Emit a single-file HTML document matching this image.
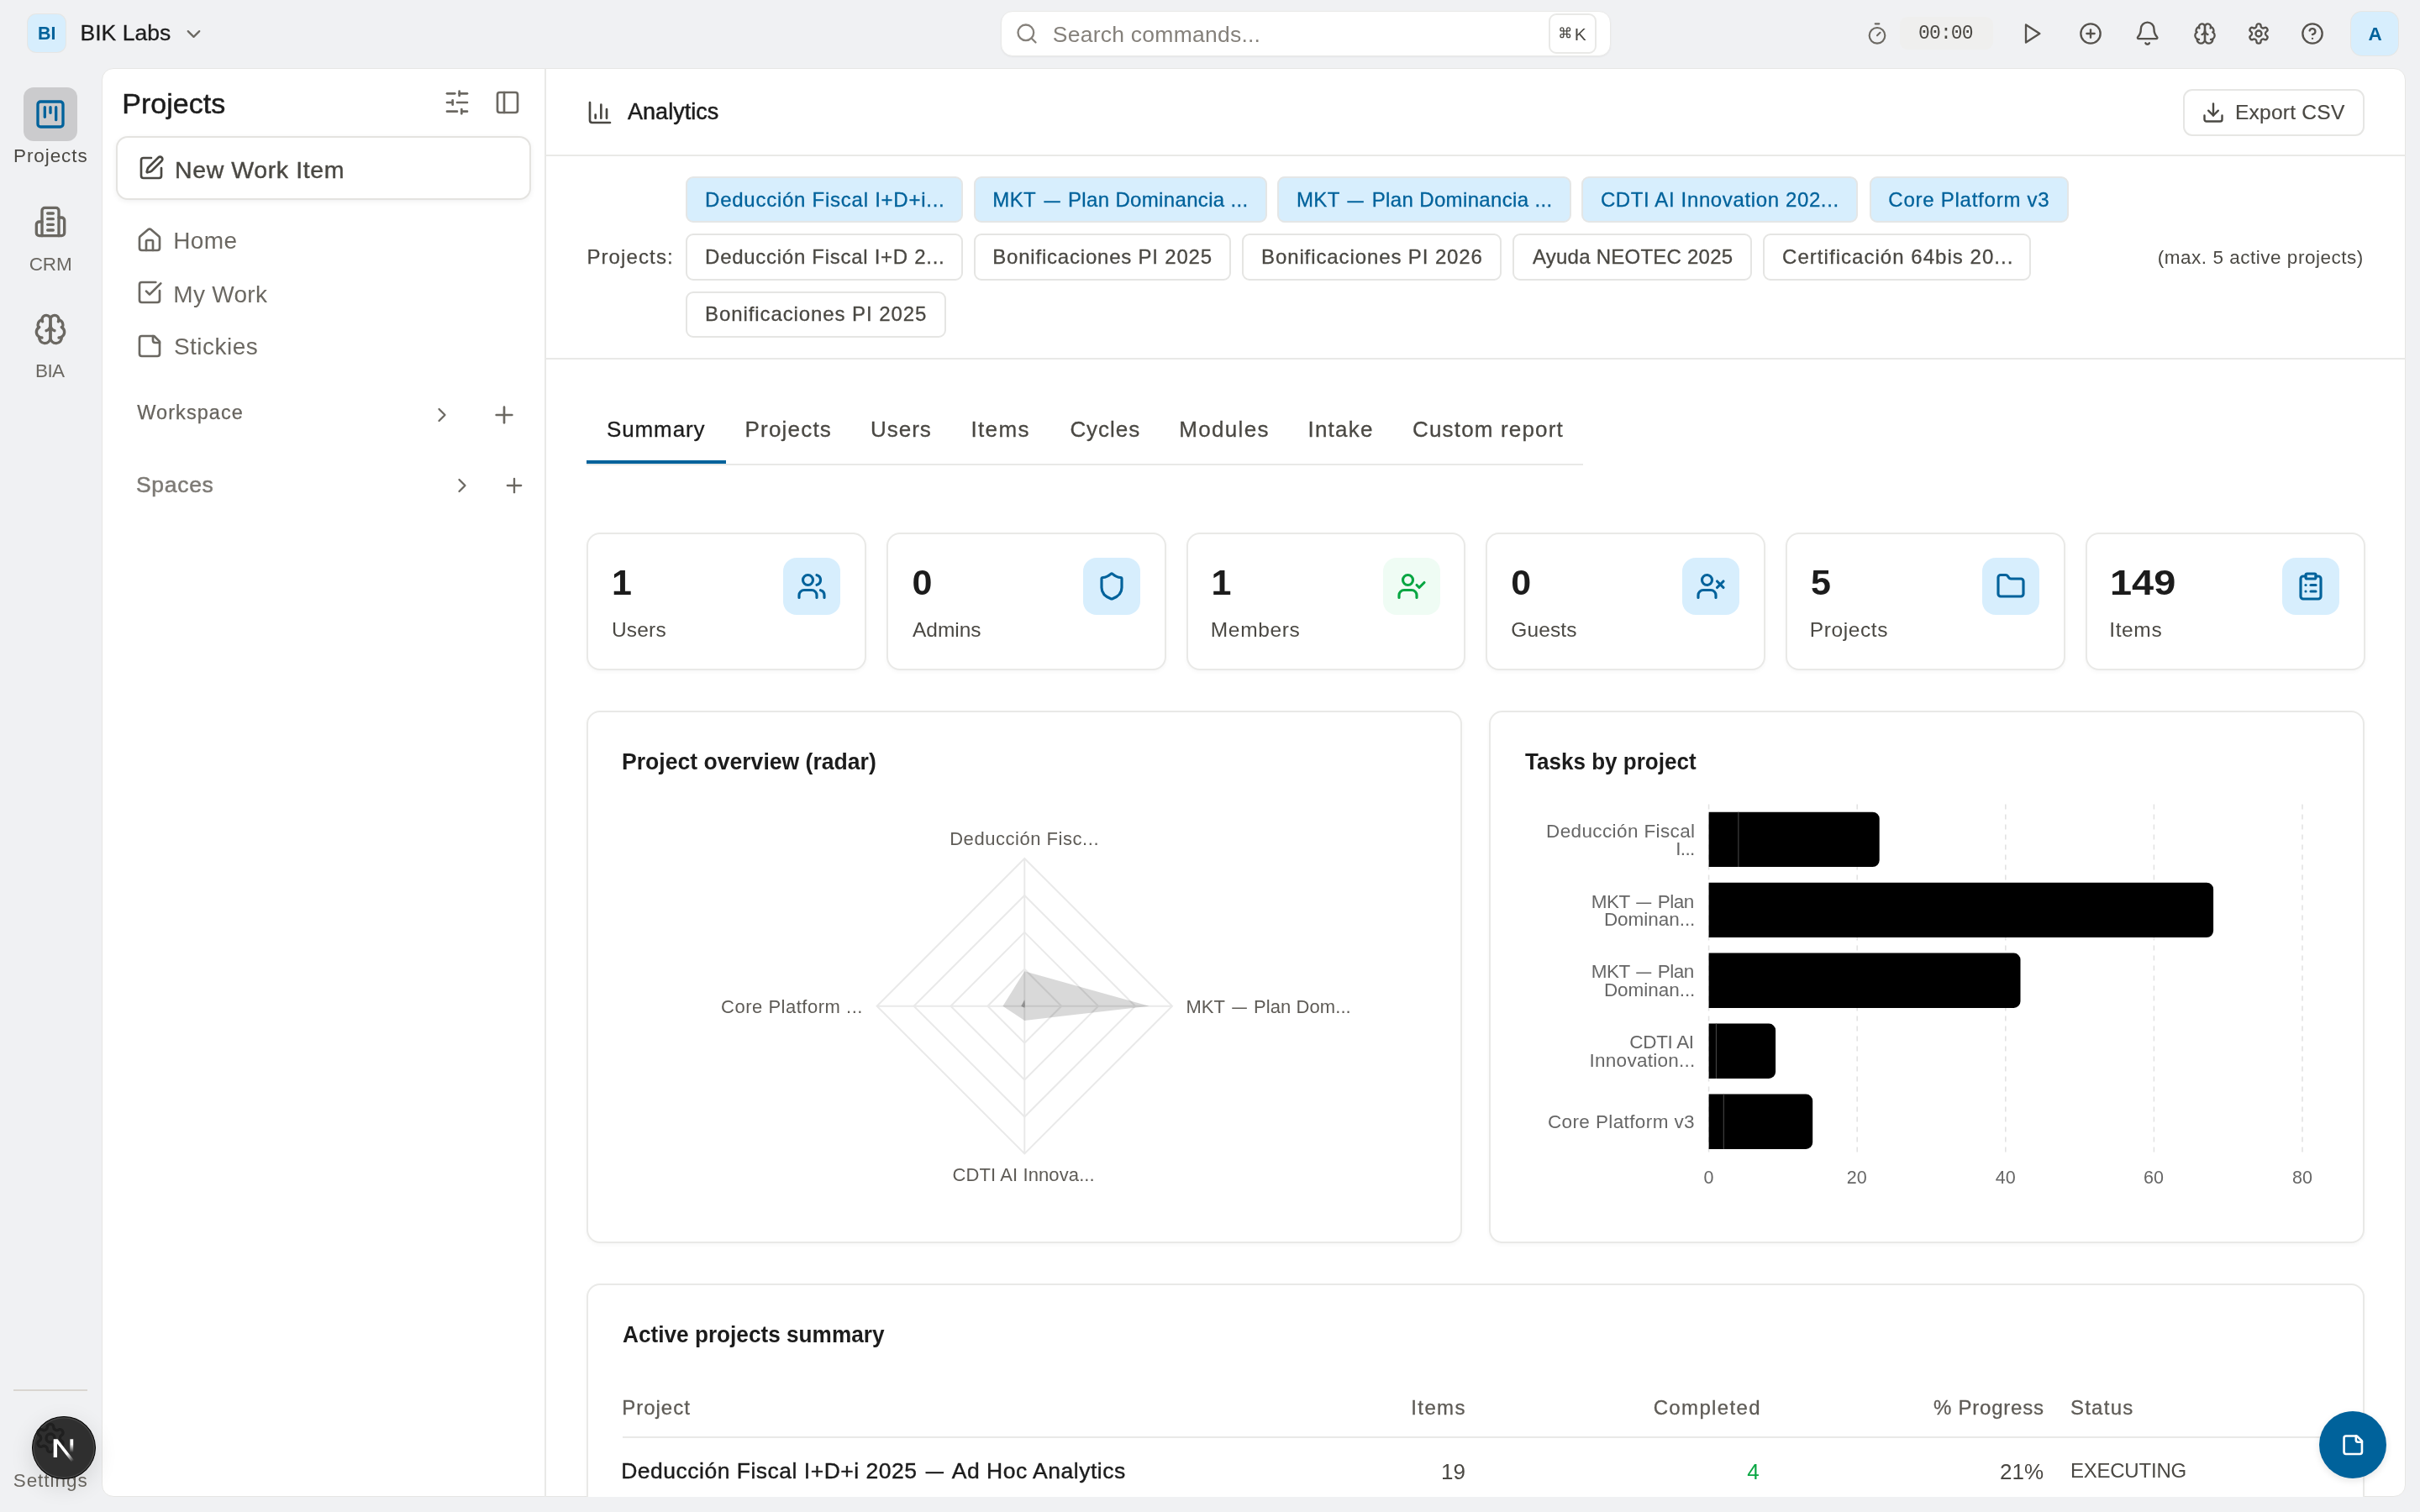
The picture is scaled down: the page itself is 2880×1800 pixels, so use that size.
<!DOCTYPE html>
<html><head><meta charset="utf-8"><title>Analytics</title>
<style>
html,body{margin:0;padding:0;}
body{width:2880px;height:1800px;overflow:hidden;background:#f0f1f3;position:relative;font-family:"Liberation Sans",sans-serif;}
#r{position:absolute;left:0;top:0;width:2880px;height:1800px;overflow:hidden;will-change:transform;}
#r>div,#r>span,#r>svg{position:absolute;box-sizing:border-box;}
#r>span{white-space:nowrap;display:block;}
#r>span>i{display:inline-block;font-style:normal;transform:scaleX(.8);}
</style></head><body><div id="r">
<div style="left:33.0px;top:17.0px;width:45.0px;height:45.0px;background:#d7eefd;border-radius:10px;box-shadow:0 0 0 1px #e6e6e4;"></div>
<span style="left:45.25px;top:29.38px;font-size:22.5px;line-height:22.5px;color:#00629b;font-weight:bold;transform-origin:0 0;transform:scaleX(0.9531);">BI</span>
<span style="left:95.50px;top:25.98px;font-size:26.5px;line-height:26.5px;color:#1c1c1c;letter-spacing:0.030px;-webkit-text-stroke:0.3px #1c1c1c;">BIK Labs</span>
<svg style="left:216.50px;top:26.50px" width="27" height="27" viewBox="0 0 24 24" fill="none" stroke="#6b6862" stroke-width="2.0" stroke-linecap="round" stroke-linejoin="round" ><path d="m6 9 6 6 6-6"/></svg>
<div style="left:1191.0px;top:13.0px;width:726.0px;height:53.5px;background:#fff;border-radius:14px;border:1px solid #e9e9e8;box-shadow:0 1px 2px rgba(0,0,0,.05);"></div>
<svg style="left:1207.60px;top:26.10px" width="28" height="28" viewBox="0 0 24 24" fill="none" stroke="#85817b" stroke-width="2.0" stroke-linecap="round" stroke-linejoin="round" ><circle cx="11" cy="11" r="8"/><path d="m21 21-4.300-4.300"/></svg>
<span style="left:1252.80px;top:28.18px;font-size:26.5px;line-height:26.5px;color:#85817b;letter-spacing:0.244px;">Search commands...</span>
<div style="left:1842.5px;top:16.4px;width:57.0px;height:47.2px;background:#fff;border-radius:9px;border:2px solid #e9e9e7;"></div>
<svg style="left:1854.75px;top:31.25px" width="15.5" height="15.5" viewBox="0 0 24 24" fill="none" stroke="#4a4843" stroke-width="2.1" stroke-linecap="round" stroke-linejoin="round" ><path d="M15 6v12a3 3 0 1 0 3-3H6a3 3 0 1 0 3 3V6a3 3 0 1 0-3 3h12a3 3 0 1 0-3-3"/></svg>
<span style="left:1873.80px;top:29.95px;font-size:21.0px;line-height:21.0px;color:#4a4843;">K</span>
<svg style="left:2219.80px;top:25.80px" width="28" height="28" viewBox="0 0 24 24" fill="none" stroke="#6b6862" stroke-width="1.8" stroke-linecap="round" stroke-linejoin="round" ><line x1="10" x2="14" y1="2" y2="2"/><line x1="12" x2="15" y1="14" y2="11"/><circle cx="12" cy="14" r="8"/></svg>
<div style="left:2261.0px;top:20.0px;width:110.5px;height:39.0px;background:#efefee;border-radius:9px;"></div>
<span style="left:2283.00px;top:29.27px;font-size:23px;line-height:23px;color:#4a4843;letter-spacing:-0.852px;font-family:'Liberation Mono',monospace;">00:00</span>
<svg style="left:2404.00px;top:26.00px" width="28" height="28" viewBox="0 0 24 24" fill="none" stroke="#55524d" stroke-width="2.0" stroke-linecap="round" stroke-linejoin="round" ><polygon points="6 3 20 12 6 21 6 3"/></svg>
<svg style="left:2474.00px;top:26.00px" width="28" height="28" viewBox="0 0 24 24" fill="none" stroke="#55524d" stroke-width="2.0" stroke-linecap="round" stroke-linejoin="round" ><circle cx="12" cy="12" r="10"/><path d="M8 12h8"/><path d="M12 8v8"/></svg>
<svg style="left:2540.25px;top:24.35px" width="31.3" height="31.3" viewBox="0 0 24 24" fill="none" stroke="#55524d" stroke-width="1.85" stroke-linecap="round" stroke-linejoin="round" ><path d="M10.268 21a2 2 0 0 0 3.464 0"/><path d="M3.262 15.326A1 1 0 0 0 4 17h16a1 1 0 0 0 .740-1.673C19.410 13.956 18 12.499 18 8A6 6 0 0 0 6 8c0 4.499-1.411 5.956-2.738 7.326"/></svg>
<svg style="left:2610.00px;top:26.00px" width="28" height="28" viewBox="0 0 24 24" fill="none" stroke="#55524d" stroke-width="2.0" stroke-linecap="round" stroke-linejoin="round" ><path d="M12 5a3 3 0 1 0-5.997.125 4 4 0 0 0-2.526 5.77 4 4 0 0 0 .556 6.588A4 4 0 1 0 12 18Z"/><path d="M12 5a3 3 0 1 1 5.997.125 4 4 0 0 1 2.526 5.77 4 4 0 0 1-.556 6.588A4 4 0 1 1 12 18Z"/><path d="M15 13a4.500 4.500 0 0 1-3-4 4.500 4.500 0 0 1-3 4"/><path d="M17.599 6.500a3 3 0 0 0 .399-1.375"/><path d="M6.003 5.125A3 3 0 0 0 6.401 6.500"/><path d="M3.477 10.896a4 4 0 0 1 .585-.396"/><path d="M19.938 10.500a4 4 0 0 1 .585.396"/><path d="M6 18a4 4 0 0 1-1.967-.516"/><path d="M19.967 17.484A4 4 0 0 1 18 18"/></svg>
<svg style="left:2673.80px;top:26.00px" width="28" height="28" viewBox="0 0 24 24" fill="none" stroke="#55524d" stroke-width="2.0" stroke-linecap="round" stroke-linejoin="round" ><path d="M12.220 2h-.440a2 2 0 0 0-2 2v.180a2 2 0 0 1-1 1.730l-.430.250a2 2 0 0 1-2 0l-.150-.080a2 2 0 0 0-2.730.730l-.220.380a2 2 0 0 0 .730 2.730l.150.100a2 2 0 0 1 1 1.720v.510a2 2 0 0 1-1 1.740l-.150.090a2 2 0 0 0-.730 2.730l.220.380a2 2 0 0 0 2.730.730l.150-.080a2 2 0 0 1 2 0l.430.250a2 2 0 0 1 1 1.730V20a2 2 0 0 0 2 2h.440a2 2 0 0 0 2-2v-.180a2 2 0 0 1 1-1.730l.430-.250a2 2 0 0 1 2 0l.150.080a2 2 0 0 0 2.730-.730l.220-.390a2 2 0 0 0-.730-2.730l-.150-.080a2 2 0 0 1-1-1.740v-.500a2 2 0 0 1 1-1.740l.150-.090a2 2 0 0 0 .730-2.730l-.220-.380a2 2 0 0 0-2.730-.730l-.150.080a2 2 0 0 1-2 0l-.430-.250a2 2 0 0 1-1-1.730V4a2 2 0 0 0-2-2z"/><circle cx="12" cy="12" r="3"/></svg>
<svg style="left:2738.00px;top:26.00px" width="28" height="28" viewBox="0 0 24 24" fill="none" stroke="#55524d" stroke-width="2.0" stroke-linecap="round" stroke-linejoin="round" ><circle cx="12" cy="12" r="10"/><path d="M9.090 9a3 3 0 0 1 5.830 1c0 2-3 3-3 3"/><path d="M12 17h.010"/></svg>
<div style="left:2798.0px;top:14.0px;width:56.0px;height:52.0px;background:#d7eefd;border-radius:13px;box-shadow:0 0 0 1px #e6e6e4;"></div>
<span style="left:2818.40px;top:29.68px;font-size:22.5px;line-height:22.5px;color:#00629b;font-weight:bold;">A</span>
<div style="left:28.0px;top:104.0px;width:64.0px;height:64.0px;background:#cbcbcd;border-radius:12px;"></div>
<svg style="left:40.00px;top:116.00px" width="40" height="40" viewBox="0 0 24 24" fill="none" stroke="#00629b" stroke-width="2.0" stroke-linecap="round" stroke-linejoin="round" ><rect width="18" height="18" x="3" y="3" rx="2"/><path d="M8 7v7"/><path d="M12 7v4"/><path d="M16 7v9"/></svg>
<span style="left:16.00px;top:175.28px;font-size:22.5px;line-height:22.5px;color:#4a4843;letter-spacing:0.910px;">Projects</span>
<svg style="left:40.00px;top:244.00px" width="40" height="40" viewBox="0 0 24 24" fill="none" stroke="#6b6862" stroke-width="2.0" stroke-linecap="round" stroke-linejoin="round" ><path d="M6 22V4a2 2 0 0 1 2-2h8a2 2 0 0 1 2 2v18Z"/><path d="M6 12H4a2 2 0 0 0-2 2v6a2 2 0 0 0 2 2h2"/><path d="M18 9h2a2 2 0 0 1 2 2v9a2 2 0 0 1-2 2h-2"/><path d="M10 6h4"/><path d="M10 10h4"/><path d="M10 14h4"/><path d="M10 18h4"/></svg>
<span style="left:34.80px;top:304.18px;font-size:22.5px;line-height:22.5px;color:#6b6862;letter-spacing:-0.199px;">CRM</span>
<svg style="left:40.00px;top:372.00px" width="40" height="40" viewBox="0 0 24 24" fill="none" stroke="#6b6862" stroke-width="2.0" stroke-linecap="round" stroke-linejoin="round" ><path d="M12 5a3 3 0 1 0-5.997.125 4 4 0 0 0-2.526 5.77 4 4 0 0 0 .556 6.588A4 4 0 1 0 12 18Z"/><path d="M12 5a3 3 0 1 1 5.997.125 4 4 0 0 1 2.526 5.77 4 4 0 0 1-.556 6.588A4 4 0 1 1 12 18Z"/><path d="M15 13a4.500 4.500 0 0 1-3-4 4.500 4.500 0 0 1-3 4"/><path d="M17.599 6.500a3 3 0 0 0 .399-1.375"/><path d="M6.003 5.125A3 3 0 0 0 6.401 6.500"/><path d="M3.477 10.896a4 4 0 0 1 .585-.396"/><path d="M19.938 10.500a4 4 0 0 1 .585.396"/><path d="M6 18a4 4 0 0 1-1.967-.516"/><path d="M19.967 17.484A4 4 0 0 1 18 18"/></svg>
<span style="left:42.00px;top:431.38px;font-size:22.5px;line-height:22.5px;color:#6b6862;letter-spacing:-0.629px;">BIA</span>
<div style="left:16.0px;top:1654.0px;width:88.0px;height:2.0px;background:#d9d5d0;"></div>
<span style="left:15.70px;top:1751.77px;font-size:22.5px;line-height:22.5px;color:#6b6862;letter-spacing:0.950px;">Settings</span>
<div style="left:121.0px;top:81.0px;width:2741.6px;height:1701.4px;background:#fff;border-radius:14px;border:1px solid #e6e6e4;"></div>
<div style="left:648.0px;top:81.0px;width:2.0px;height:1701.0px;background:#e9e9e7;"></div>
<span style="left:145.30px;top:105.70px;font-size:34.0px;line-height:34.0px;color:#1c1c1c;letter-spacing:0.026px;-webkit-text-stroke:0.5px #1c1c1c;">Projects</span>
<svg style="left:527.70px;top:106.00px" width="32" height="32" viewBox="0 0 24 24" fill="none" stroke="#6b6862" stroke-width="2.0" stroke-linecap="round" stroke-linejoin="round" ><line x1="21" x2="14" y1="4" y2="4"/><line x1="10" x2="3" y1="4" y2="4"/><line x1="21" x2="12" y1="12" y2="12"/><line x1="8" x2="3" y1="12" y2="12"/><line x1="21" x2="16" y1="20" y2="20"/><line x1="12" x2="3" y1="20" y2="20"/><line x1="14" x2="14" y1="2" y2="6"/><line x1="8" x2="8" y1="10" y2="14"/><line x1="16" x2="16" y1="18" y2="22"/></svg>
<svg style="left:588.00px;top:106.00px" width="32" height="32" viewBox="0 0 24 24" fill="none" stroke="#6b6862" stroke-width="2.0" stroke-linecap="round" stroke-linejoin="round" ><rect width="18" height="18" x="3" y="3" rx="2"/><path d="M9 3v18"/></svg>
<div style="left:138.0px;top:162.0px;width:494.0px;height:76.0px;background:#fff;border-radius:14px;border:2px solid #e4e3e0;box-shadow:0 2px 6px rgba(0,0,0,.06);"></div>
<svg style="left:164.00px;top:184.00px" width="32" height="32" viewBox="0 0 24 24" fill="none" stroke="#4a4843" stroke-width="2.0" stroke-linecap="round" stroke-linejoin="round" ><path d="M12 3H5a2 2 0 0 0-2 2v14a2 2 0 0 0 2 2h14a2 2 0 0 0 2-2v-7"/><path d="M18.375 2.625a1 1 0 0 1 3 3l-9.013 9.014a2 2 0 0 1-.853.505l-2.873.84a.5.5 0 0 1-.62-.62l.84-2.873a2 2 0 0 1 .506-.852z"/></svg>
<span style="left:208.00px;top:188.28px;font-size:28.5px;line-height:28.5px;color:#4a4843;letter-spacing:0.599px;-webkit-text-stroke:0.4px #4a4843;">New Work Item</span>
<svg style="left:162.20px;top:269.90px" width="32" height="32" viewBox="0 0 24 24" fill="none" stroke="#6b6862" stroke-width="2.0" stroke-linecap="round" stroke-linejoin="round" ><path d="M15 21v-8a1 1 0 0 0-1-1h-4a1 1 0 0 0-1 1v8"/><path d="M3 10a2 2 0 0 1 .709-1.528l7-5.999a2 2 0 0 1 2.582 0l7 5.999A2 2 0 0 1 21 10v9a2 2 0 0 1-2 2H5a2 2 0 0 1-2-2z"/></svg>
<span style="left:206.30px;top:272.50px;font-size:28px;line-height:28px;color:#6b6862;letter-spacing:0.328px;">Home</span>
<svg style="left:162.20px;top:332.20px" width="32" height="32" viewBox="0 0 24 24" fill="none" stroke="#6b6862" stroke-width="2.0" stroke-linecap="round" stroke-linejoin="round" ><path d="M21 10.500V19a2 2 0 0 1-2 2H5a2 2 0 0 1-2-2V5a2 2 0 0 1 2-2h12.500"/><path d="m9 11 3 3L22 4"/></svg>
<span style="left:206.30px;top:336.70px;font-size:28px;line-height:28px;color:#6b6862;letter-spacing:0.296px;">My Work</span>
<svg style="left:162.00px;top:396.00px" width="32" height="32" viewBox="0 0 24 24" fill="none" stroke="#6b6862" stroke-width="2.0" stroke-linecap="round" stroke-linejoin="round" ><path d="M16 3H5a2 2 0 0 0-2 2v14a2 2 0 0 0 2 2h14a2 2 0 0 0 2-2V8Z"/><path d="M15 3v4a2 2 0 0 0 2 2h4"/></svg>
<span style="left:206.90px;top:398.50px;font-size:28px;line-height:28px;color:#6b6862;letter-spacing:0.490px;">Stickies</span>
<span style="left:163.30px;top:480.23px;font-size:23.5px;line-height:23.5px;color:#67645e;letter-spacing:1.057px;-webkit-text-stroke:0.25px #67645e;">Workspace</span>
<svg style="left:511.90px;top:480.00px" width="28" height="28" viewBox="0 0 24 24" fill="none" stroke="#6b6862" stroke-width="1.95" stroke-linecap="round" stroke-linejoin="round" ><path d="m9 18 6-6-6-6"/></svg>
<svg style="left:583.90px;top:478.00px" width="32" height="32" viewBox="0 0 24 24" fill="none" stroke="#6b6862" stroke-width="2.0" stroke-linecap="round" stroke-linejoin="round" ><path d="M5 12h14"/><path d="M12 5v14"/></svg>
<span style="left:162.00px;top:564.08px;font-size:26.5px;line-height:26.5px;color:#7d7a75;letter-spacing:0.692px;-webkit-text-stroke:0.5px #7d7a75;">Spaces</span>
<svg style="left:535.90px;top:563.80px" width="28" height="28" viewBox="0 0 24 24" fill="none" stroke="#6b6862" stroke-width="1.95" stroke-linecap="round" stroke-linejoin="round" ><path d="m9 18 6-6-6-6"/></svg>
<svg style="left:597.90px;top:564.00px" width="28" height="28" viewBox="0 0 24 24" fill="none" stroke="#6b6862" stroke-width="2.0" stroke-linecap="round" stroke-linejoin="round" ><path d="M5 12h14"/><path d="M12 5v14"/></svg>
<svg style="left:697.90px;top:118.30px" width="32" height="32" viewBox="0 0 24 24" fill="none" stroke="#4a4843" stroke-width="2.0" stroke-linecap="round" stroke-linejoin="round" ><path d="M3 3v16a2 2 0 0 0 2 2h16"/><path d="M18 17V9"/><path d="M13 17V5"/><path d="M8 17v-3"/></svg>
<span style="left:747.00px;top:120.15px;font-size:27.0px;line-height:27.0px;color:#1c1c1c;letter-spacing:0.033px;-webkit-text-stroke:0.5px #1c1c1c;">Analytics</span>
<div style="left:2598.3px;top:106.0px;width:215.7px;height:56.0px;background:#fff;border-radius:11px;border:2px solid #e6e6e4;"></div>
<svg style="left:2620.00px;top:119.90px" width="28" height="28" viewBox="0 0 24 24" fill="none" stroke="#4a4843" stroke-width="2.05" stroke-linecap="round" stroke-linejoin="round" ><path d="M21 15v4a2 2 0 0 1-2 2H5a2 2 0 0 1-2-2v-4"/><polyline points="7 10 12 15 17 10"/><line x1="12" x2="12" y1="15" y2="3"/></svg>
<span style="left:2660.00px;top:121.67px;font-size:24.5px;line-height:24.5px;color:#4a4843;letter-spacing:0.250px;-webkit-text-stroke:0.2px #4a4843;">Export CSV</span>
<div style="left:650.0px;top:184.0px;width:2212.5px;height:2.0px;background:#e9e9e7;"></div>
<span style="left:698.40px;top:294.30px;font-size:24px;line-height:24px;color:#4a4843;letter-spacing:1.113px;-webkit-text-stroke:0.25px #4a4843;">Projects:</span>
<div style="left:816.4px;top:210.2px;width:329.4px;height:55.3px;background:#d7eefd;border-radius:9px;border:2px solid #e4e6e6;"></div>
<span style="left:839.10px;top:226.00px;font-size:24px;line-height:24px;color:#00629b;letter-spacing:0.745px;-webkit-text-stroke:0.3px #00629b;">Deducción Fiscal I+D+i...</span>
<div style="left:1158.6px;top:210.2px;width:349.1px;height:55.3px;background:#d7eefd;border-radius:9px;border:2px solid #e4e6e6;"></div>
<span style="left:1181.30px;top:226.00px;font-size:24px;line-height:24px;color:#00629b;letter-spacing:0.345px;-webkit-text-stroke:0.3px #00629b;">MKT <i>—</i> Plan Dominancia ...</span>
<div style="left:1520.3px;top:210.2px;width:349.4px;height:55.3px;background:#d7eefd;border-radius:9px;border:2px solid #e4e6e6;"></div>
<span style="left:1543.00px;top:226.00px;font-size:24px;line-height:24px;color:#00629b;letter-spacing:0.357px;-webkit-text-stroke:0.3px #00629b;">MKT <i>—</i> Plan Dominancia ...</span>
<div style="left:1882.2px;top:210.2px;width:329.3px;height:55.3px;background:#d7eefd;border-radius:9px;border:2px solid #e4e6e6;"></div>
<span style="left:1904.90px;top:226.00px;font-size:24px;line-height:24px;color:#00629b;letter-spacing:0.629px;-webkit-text-stroke:0.3px #00629b;">CDTI AI Innovation 202...</span>
<div style="left:2224.6px;top:210.2px;width:237.4px;height:55.3px;background:#d7eefd;border-radius:9px;border:2px solid #e4e6e6;"></div>
<span style="left:2247.30px;top:226.00px;font-size:24px;line-height:24px;color:#00629b;letter-spacing:0.753px;-webkit-text-stroke:0.3px #00629b;">Core Platform v3</span>
<div style="left:816.4px;top:278.4px;width:329.4px;height:55.3px;background:#fff;border-radius:9px;border:2px solid #e5e5e3;"></div>
<span style="left:839.10px;top:294.20px;font-size:24px;line-height:24px;color:#4a4843;letter-spacing:0.718px;-webkit-text-stroke:0.3px #4a4843;">Deducción Fiscal I+D 2...</span>
<div style="left:1158.6px;top:278.4px;width:306.8px;height:55.3px;background:#fff;border-radius:9px;border:2px solid #e5e5e3;"></div>
<span style="left:1181.30px;top:294.20px;font-size:24px;line-height:24px;color:#4a4843;letter-spacing:0.790px;-webkit-text-stroke:0.3px #4a4843;">Bonificaciones PI 2025</span>
<div style="left:1478.3px;top:278.4px;width:309.0px;height:55.3px;background:#fff;border-radius:9px;border:2px solid #e5e5e3;"></div>
<span style="left:1501.00px;top:294.20px;font-size:24px;line-height:24px;color:#4a4843;letter-spacing:0.895px;-webkit-text-stroke:0.3px #4a4843;">Bonificaciones PI 2026</span>
<div style="left:1800.2px;top:278.4px;width:285.3px;height:55.3px;background:#fff;border-radius:9px;border:2px solid #e5e5e3;"></div>
<span style="left:1823.90px;top:294.20px;font-size:24px;line-height:24px;color:#4a4843;letter-spacing:0.244px;-webkit-text-stroke:0.3px #4a4843;">Ayuda NEOTEC 2025</span>
<div style="left:2098.4px;top:278.4px;width:319.0px;height:55.3px;background:#fff;border-radius:9px;border:2px solid #e5e5e3;"></div>
<span style="left:2121.10px;top:294.20px;font-size:24px;line-height:24px;color:#4a4843;letter-spacing:1.034px;-webkit-text-stroke:0.3px #4a4843;">Certificación 64bis 20...</span>
<div style="left:816.4px;top:346.6px;width:309.2px;height:55.3px;background:#fff;border-radius:9px;border:2px solid #e5e5e3;"></div>
<span style="left:839.10px;top:362.40px;font-size:24px;line-height:24px;color:#4a4843;letter-spacing:0.904px;-webkit-text-stroke:0.3px #4a4843;">Bonificaciones PI 2025</span>
<span style="left:2567.80px;top:295.68px;font-size:22.5px;line-height:22.5px;color:#4a4843;letter-spacing:0.518px;">(max. 5 active projects)</span>
<div style="left:650.0px;top:426.0px;width:2212.5px;height:2.0px;background:#e9e9e7;"></div>
<span style="left:722.00px;top:498.20px;font-size:26.0px;line-height:26.0px;color:#1c1c1c;letter-spacing:0.877px;-webkit-text-stroke:0.3px #1c1c1c;">Summary</span>
<span style="left:886.50px;top:498.20px;font-size:26.0px;line-height:26.0px;color:#4a4843;letter-spacing:1.197px;-webkit-text-stroke:0.3px #4a4843;">Projects</span>
<span style="left:1035.90px;top:498.20px;font-size:26.0px;line-height:26.0px;color:#4a4843;letter-spacing:1.001px;-webkit-text-stroke:0.3px #4a4843;">Users</span>
<span style="left:1155.50px;top:498.20px;font-size:26.0px;line-height:26.0px;color:#4a4843;letter-spacing:1.334px;-webkit-text-stroke:0.3px #4a4843;">Items</span>
<span style="left:1273.40px;top:498.20px;font-size:26.0px;line-height:26.0px;color:#4a4843;letter-spacing:0.957px;-webkit-text-stroke:0.3px #4a4843;">Cycles</span>
<span style="left:1403.30px;top:498.20px;font-size:26.0px;line-height:26.0px;color:#4a4843;letter-spacing:1.304px;-webkit-text-stroke:0.3px #4a4843;">Modules</span>
<span style="left:1556.50px;top:498.20px;font-size:26.0px;line-height:26.0px;color:#4a4843;letter-spacing:1.207px;-webkit-text-stroke:0.3px #4a4843;">Intake</span>
<span style="left:1681.00px;top:498.20px;font-size:26.0px;line-height:26.0px;color:#4a4843;letter-spacing:1.167px;-webkit-text-stroke:0.3px #4a4843;">Custom report</span>
<div style="left:698.0px;top:552.0px;width:1186.0px;height:2.0px;background:#e9e9e7;"></div>
<div style="left:698.0px;top:548.0px;width:166.0px;height:4.0px;background:#00629b;"></div>
<div style="left:698.0px;top:634.0px;width:332.8px;height:164.0px;background:#fff;border-radius:16px;border:2px solid #e9e9e7;box-shadow:0 2px 5px rgba(0,0,0,.035);"></div>
<span style="left:728.00px;top:672.35px;font-size:43px;line-height:43px;color:#1c1c1c;font-weight:bold;">1</span>
<span style="left:728.00px;top:738.17px;font-size:24.5px;line-height:24.5px;color:#4a4843;letter-spacing:0.168px;">Users</span>
<div style="left:932.0px;top:664.0px;width:68.0px;height:68.0px;background:#d7eefd;border-radius:16px;"></div>
<svg style="left:948.00px;top:680.00px" width="36" height="36" viewBox="0 0 24 24" fill="none" stroke="#00629b" stroke-width="2.1" stroke-linecap="round" stroke-linejoin="round" ><path d="M16 21v-2a4 4 0 0 0-4-4H6a4 4 0 0 0-4 4v2"/><circle cx="9" cy="7" r="4"/><path d="M22 21v-2a4 4 0 0 0-3-3.870"/><path d="M16 3.130a4 4 0 0 1 0 7.750"/></svg>
<div style="left:1054.8px;top:634.0px;width:332.8px;height:164.0px;background:#fff;border-radius:16px;border:2px solid #e9e9e7;box-shadow:0 2px 5px rgba(0,0,0,.035);"></div>
<span style="left:1085.40px;top:672.35px;font-size:43px;line-height:43px;color:#1c1c1c;font-weight:bold;">0</span>
<span style="left:1086.00px;top:738.17px;font-size:24.5px;line-height:24.5px;color:#4a4843;letter-spacing:-0.029px;">Admins</span>
<div style="left:1288.8px;top:664.0px;width:68.0px;height:68.0px;background:#d7eefd;border-radius:16px;"></div>
<svg style="left:1304.80px;top:680.00px" width="36" height="36" viewBox="0 0 24 24" fill="none" stroke="#00629b" stroke-width="2.1" stroke-linecap="round" stroke-linejoin="round" ><path d="M20 13c0 5-3.500 7.500-7.660 8.950a1 1 0 0 1-.670-.010C7.500 20.500 4 18 4 13V6a1 1 0 0 1 1-1c2 0 4.500-1.200 6.240-2.720a1.170 1.170 0 0 1 1.520 0C14.510 3.810 17 5 19 5a1 1 0 0 1 1 1z"/></svg>
<div style="left:1411.6px;top:634.0px;width:332.8px;height:164.0px;background:#fff;border-radius:16px;border:2px solid #e9e9e7;box-shadow:0 2px 5px rgba(0,0,0,.035);"></div>
<span style="left:1441.50px;top:672.35px;font-size:43px;line-height:43px;color:#1c1c1c;font-weight:bold;">1</span>
<span style="left:1440.80px;top:738.17px;font-size:24.5px;line-height:24.5px;color:#4a4843;letter-spacing:0.658px;">Members</span>
<div style="left:1645.6px;top:664.0px;width:68.0px;height:68.0px;background:#effcf4;border-radius:16px;"></div>
<svg style="left:1661.60px;top:680.00px" width="36" height="36" viewBox="0 0 24 24" fill="none" stroke="#08a642" stroke-width="2.1" stroke-linecap="round" stroke-linejoin="round" ><path d="M16 21v-2a4 4 0 0 0-4-4H6a4 4 0 0 0-4 4v2"/><circle cx="9" cy="7" r="4"/><polyline points="16 11 18 13 22 9"/></svg>
<div style="left:1768.4px;top:634.0px;width:332.8px;height:164.0px;background:#fff;border-radius:16px;border:2px solid #e9e9e7;box-shadow:0 2px 5px rgba(0,0,0,.035);"></div>
<span style="left:1798.30px;top:672.35px;font-size:43px;line-height:43px;color:#1c1c1c;font-weight:bold;">0</span>
<span style="left:1798.30px;top:738.17px;font-size:24.5px;line-height:24.5px;color:#4a4843;letter-spacing:0.107px;">Guests</span>
<div style="left:2002.4px;top:664.0px;width:68.0px;height:68.0px;background:#d7eefd;border-radius:16px;"></div>
<svg style="left:2018.40px;top:680.00px" width="36" height="36" viewBox="0 0 24 24" fill="none" stroke="#00629b" stroke-width="2.1" stroke-linecap="round" stroke-linejoin="round" ><path d="M16 21v-2a4 4 0 0 0-4-4H6a4 4 0 0 0-4 4v2"/><circle cx="9" cy="7" r="4"/><line x1="17" x2="22" y1="8" y2="13"/><line x1="22" x2="17" y1="8" y2="13"/></svg>
<div style="left:2125.2px;top:634.0px;width:332.8px;height:164.0px;background:#fff;border-radius:16px;border:2px solid #e9e9e7;box-shadow:0 2px 5px rgba(0,0,0,.035);"></div>
<span style="left:2155.00px;top:672.35px;font-size:43px;line-height:43px;color:#1c1c1c;font-weight:bold;">5</span>
<span style="left:2153.70px;top:738.17px;font-size:24.5px;line-height:24.5px;color:#4a4843;letter-spacing:0.607px;">Projects</span>
<div style="left:2359.2px;top:664.0px;width:68.0px;height:68.0px;background:#d7eefd;border-radius:16px;"></div>
<svg style="left:2375.20px;top:680.00px" width="36" height="36" viewBox="0 0 24 24" fill="none" stroke="#00629b" stroke-width="2.1" stroke-linecap="round" stroke-linejoin="round" ><path d="M20 20a2 2 0 0 0 2-2V8a2 2 0 0 0-2-2h-7.900a2 2 0 0 1-1.690-.900L9.600 3.900A2 2 0 0 0 7.930 3H4a2 2 0 0 0-2 2v13a2 2 0 0 0 2 2Z"/></svg>
<div style="left:2482.0px;top:634.0px;width:332.8px;height:164.0px;background:#fff;border-radius:16px;border:2px solid #e9e9e7;box-shadow:0 2px 5px rgba(0,0,0,.035);"></div>
<span style="left:2510.62px;top:672.35px;font-size:43px;line-height:43px;color:#1c1c1c;font-weight:bold;transform-origin:0 0;transform:scaleX(1.0911);">149</span>
<span style="left:2510.20px;top:738.17px;font-size:24.5px;line-height:24.5px;color:#4a4843;letter-spacing:0.638px;">Items</span>
<div style="left:2716.0px;top:664.0px;width:68.0px;height:68.0px;background:#d7eefd;border-radius:16px;"></div>
<svg style="left:2732.00px;top:680.00px" width="36" height="36" viewBox="0 0 24 24" fill="none" stroke="#00629b" stroke-width="2.1" stroke-linecap="round" stroke-linejoin="round" ><rect width="8" height="4" x="8" y="2" rx="1" ry="1"/><path d="M16 4h2a2 2 0 0 1 2 2v14a2 2 0 0 1-2 2H6a2 2 0 0 1-2-2V6a2 2 0 0 1 2-2h2"/><path d="M12 11h4"/><path d="M12 16h4"/><path d="M8 11h.010"/><path d="M8 16h.010"/></svg>
<div style="left:698.0px;top:846.0px;width:1042.0px;height:634.0px;background:#fff;border-radius:16px;border:2px solid #e9e9e7;box-shadow:0 2px 5px rgba(0,0,0,.035);"></div>
<div style="left:1772.0px;top:846.0px;width:1042.0px;height:634.0px;background:#fff;border-radius:16px;border:2px solid #e9e9e7;box-shadow:0 2px 5px rgba(0,0,0,.035);"></div>
<span style="left:740.22px;top:893.65px;font-size:27px;line-height:27px;color:#1c1c1c;font-weight:bold;transform-origin:0 0;transform:scaleX(0.9842);">Project overview (radar)</span>
<span style="left:1815.20px;top:893.65px;font-size:27px;line-height:27px;color:#1c1c1c;font-weight:bold;transform-origin:0 0;transform:scaleX(0.9645);">Tasks by project</span>
<svg style="left:0;top:0" width="2880" height="1800" viewBox="0 0 2880 1800" fill="none"><polygon points="1219.3,1153.775 1263.225,1197.7 1219.3,1241.625 1175.375,1197.7" stroke="#e9e9e9" stroke-width="2"/><polygon points="1219.3,1109.8500000000001 1307.1499999999999,1197.7 1219.3,1285.55 1131.45,1197.7" stroke="#e9e9e9" stroke-width="2"/><polygon points="1219.3,1065.9250000000002 1351.0749999999998,1197.7 1219.3,1329.475 1087.525,1197.7" stroke="#e9e9e9" stroke-width="2"/><polygon points="1219.3,1022.0 1395.0,1197.7 1219.3,1373.4 1043.6,1197.7" stroke="#e9e9e9" stroke-width="2"/><path d="M1043.6 1197.7H1395.0M1219.3 1022.0V1373.4" stroke="#e9e9e9" stroke-width="2"/><polygon points="1219.3,1156.2 1367.7,1197.7 1219.3,1215.0 1193.3999999999999,1197.7" fill="#000" fill-opacity="0.15"/><polygon points="1219.3,1190.2 1219.8999999999999,1197.7 1219.3,1199.7 1215.2,1197.7" fill="#000" fill-opacity="0.3"/><path d="M2033.6 957.5V1372.5" stroke="#e3e3e3" stroke-width="1.6" stroke-dasharray="6 6"/><path d="M2210.2 957.5V1372.5" stroke="#e3e3e3" stroke-width="1.6" stroke-dasharray="6 6"/><path d="M2386.8 957.5V1372.5" stroke="#e3e3e3" stroke-width="1.6" stroke-dasharray="6 6"/><path d="M2563.4 957.5V1372.5" stroke="#e3e3e3" stroke-width="1.6" stroke-dasharray="6 6"/><path d="M2740.0 957.5V1372.5" stroke="#e3e3e3" stroke-width="1.6" stroke-dasharray="6 6"/><path d="M2033.6 966.7H2228.7a8 8 0 0 1 8 8V1024.0a8 8 0 0 1 -8 8H2033.6Z" fill="#000"/><path d="M2068.9 966.7v65.3" stroke="#4a4a4a" stroke-width="1"/><path d="M2033.6 1050.7H2626.1a8 8 0 0 1 8 8V1108.0a8 8 0 0 1 -8 8H2033.6Z" fill="#000"/><path d="M2033.6 1134.6H2396.5a8 8 0 0 1 8 8V1191.9a8 8 0 0 1 -8 8H2033.6Z" fill="#000"/><path d="M2033.6 1218.6H2105.1a8 8 0 0 1 8 8V1275.9a8 8 0 0 1 -8 8H2033.6Z" fill="#000"/><path d="M2042.4 1218.6v65.3" stroke="#4a4a4a" stroke-width="1"/><path d="M2033.6 1302.6H2149.2a8 8 0 0 1 8 8V1359.9a8 8 0 0 1 -8 8H2033.6Z" fill="#000"/><path d="M2051.3 1302.6v65.3" stroke="#4a4a4a" stroke-width="1"/></svg>
<span style="left:1130.20px;top:987.60px;font-size:22px;line-height:22px;color:#5e5b56;letter-spacing:0.537px;">Deducción Fisc...</span>
<span style="left:1411.40px;top:1187.50px;font-size:22px;line-height:22px;color:#5e5b56;letter-spacing:0.070px;">MKT <i>—</i> Plan Dom...</span>
<span style="left:858.00px;top:1187.80px;font-size:22px;line-height:22px;color:#5e5b56;letter-spacing:0.516px;">Core Platform ...</span>
<span style="left:1133.40px;top:1387.80px;font-size:22px;line-height:22px;color:#5e5b56;letter-spacing:0.112px;">CDTI AI Innova...</span>
<span style="left:1840.00px;top:978.53px;font-size:22.5px;line-height:22.5px;color:#666666;letter-spacing:0.385px;">Deducción Fiscal</span>
<span style="left:1994.20px;top:1000.33px;font-size:22.5px;line-height:22.5px;color:#666666;letter-spacing:-0.618px;">I...</span>
<span style="left:1893.70px;top:1062.50px;font-size:22.5px;line-height:22.5px;color:#666666;letter-spacing:-0.513px;">MKT <i>—</i> Plan</span>
<span style="left:1908.90px;top:1084.30px;font-size:22.5px;line-height:22.5px;color:#666666;letter-spacing:-0.038px;">Dominan...</span>
<span style="left:1893.70px;top:1146.47px;font-size:22.5px;line-height:22.5px;color:#666666;letter-spacing:-0.513px;">MKT <i>—</i> Plan</span>
<span style="left:1908.90px;top:1168.27px;font-size:22.5px;line-height:22.5px;color:#666666;letter-spacing:-0.038px;">Dominan...</span>
<span style="left:1939.30px;top:1230.44px;font-size:22.5px;line-height:22.5px;color:#666666;letter-spacing:-0.325px;">CDTI AI</span>
<span style="left:1891.50px;top:1252.24px;font-size:22.5px;line-height:22.5px;color:#666666;letter-spacing:0.272px;">Innovation...</span>
<span style="left:1841.90px;top:1325.30px;font-size:22.5px;line-height:22.5px;color:#666666;letter-spacing:0.394px;">Core Platform v3</span>
<span style="left:2027.60px;top:1392.32px;font-size:21.5px;line-height:21.5px;color:#666666;">0</span>
<span style="left:2197.73px;top:1392.32px;font-size:21.5px;line-height:21.5px;color:#666666;">20</span>
<span style="left:2374.84px;top:1392.32px;font-size:21.5px;line-height:21.5px;color:#666666;">40</span>
<span style="left:2550.95px;top:1392.32px;font-size:21.5px;line-height:21.5px;color:#666666;">60</span>
<span style="left:2728.06px;top:1392.32px;font-size:21.5px;line-height:21.5px;color:#666666;">80</span>
<div style="left:121px;top:81px;width:2741.6px;height:1701.4px;overflow:hidden;border-radius:14px;"><div style="position:absolute;box-sizing:border-box;left:577px;top:1447px;width:2116px;height:320px;background:#fff;border-radius:16px;border:2px solid #e9e9e7;box-shadow:0 2px 5px rgba(0,0,0,.035);"></div></div>
<span style="left:741.20px;top:1575.65px;font-size:27px;line-height:27px;color:#1c1c1c;font-weight:bold;transform-origin:0 0;transform:scaleX(0.9700);">Active projects summary</span>
<span style="left:740.20px;top:1663.80px;font-size:24px;line-height:24px;color:#5e5b56;letter-spacing:0.995px;-webkit-text-stroke:0.3px #5e5b56;">Project</span>
<span style="left:1679.30px;top:1663.80px;font-size:24px;line-height:24px;color:#5e5b56;letter-spacing:1.381px;-webkit-text-stroke:0.3px #5e5b56;">Items</span>
<span style="left:1967.70px;top:1663.80px;font-size:24px;line-height:24px;color:#5e5b56;letter-spacing:1.348px;-webkit-text-stroke:0.3px #5e5b56;">Completed</span>
<span style="left:2301.00px;top:1663.80px;font-size:24px;line-height:24px;color:#5e5b56;letter-spacing:0.773px;-webkit-text-stroke:0.3px #5e5b56;">% Progress</span>
<span style="left:2463.90px;top:1663.80px;font-size:24px;line-height:24px;color:#5e5b56;letter-spacing:1.272px;-webkit-text-stroke:0.3px #5e5b56;">Status</span>
<div style="left:740.7px;top:1710.0px;width:2031.3px;height:2.0px;background:#e9e9e7;"></div>
<span style="left:739.20px;top:1738.07px;font-size:26.5px;line-height:26.5px;color:#1c1c1c;letter-spacing:0.501px;-webkit-text-stroke:0.4px #1c1c1c;">Deducción Fiscal I+D+i 2025 <i>—</i> Ad Hoc Analytics</span>
<span style="left:1715.04px;top:1738.50px;font-size:26px;line-height:26px;color:#4a4843;">19</span>
<span style="left:2079.20px;top:1738.50px;font-size:26px;line-height:26px;color:#08a642;">4</span>
<span style="left:2380.08px;top:1738.50px;font-size:26px;line-height:26px;color:#4a4843;">21%</span>
<span style="left:2463.90px;top:1738.60px;font-size:24px;line-height:24px;color:#4a4843;letter-spacing:-0.218px;">EXECUTING</span>
<div style="left:2760.0px;top:1680.0px;width:80.0px;height:80.0px;background:#00629b;border-radius:50%;box-shadow:0 3px 8px rgba(0,0,0,.10);"></div>
<svg style="left:2785.75px;top:1705.75px" width="28.5" height="28.5" viewBox="0 0 24 24" fill="none" stroke="#fff" stroke-width="2.2" stroke-linecap="round" stroke-linejoin="round" ><path d="M16 3H5a2 2 0 0 0-2 2v14a2 2 0 0 0 2 2h14a2 2 0 0 0 2-2V8Z"/><path d="M15 3v4a2 2 0 0 0 2 2h4"/></svg>
<div style="left:38.4px;top:1685.9px;width:75.4px;height:75.3px;background:#2f2f2f;border-radius:50%;border:1.3px solid #000;box-shadow:0 0 0 1.6px rgba(255,255,255,.10) inset,0 8px 28px rgba(0,0,0,.12);"></div>
<svg style="left:39.80px;top:1692.40px" width="40" height="40" viewBox="0 0 24 24" fill="none" stroke="#1f1f1f" stroke-width="2.0" stroke-linecap="round" stroke-linejoin="round" ><path d="M12.220 2h-.440a2 2 0 0 0-2 2v.180a2 2 0 0 1-1 1.730l-.430.250a2 2 0 0 1-2 0l-.150-.080a2 2 0 0 0-2.730.730l-.220.380a2 2 0 0 0 .730 2.730l.150.100a2 2 0 0 1 1 1.720v.510a2 2 0 0 1-1 1.740l-.150.090a2 2 0 0 0-.730 2.730l.220.380a2 2 0 0 0 2.730.730l.150-.080a2 2 0 0 1 2 0l.430.250a2 2 0 0 1 1 1.730V20a2 2 0 0 0 2 2h.440a2 2 0 0 0 2-2v-.180a2 2 0 0 1 1-1.730l.430-.250a2 2 0 0 1 2 0l.150.080a2 2 0 0 0 2.730-.730l.220-.390a2 2 0 0 0-.730-2.730l-.150-.080a2 2 0 0 1-1-1.740v-.500a2 2 0 0 1 1-1.740l.150-.090a2 2 0 0 0 .730-2.730l-.220-.380a2 2 0 0 0-2.730-.730l-.150.080a2 2 0 0 1-2 0l-.430-.250a2 2 0 0 1-1-1.730V4a2 2 0 0 0-2-2z"/><circle cx="12" cy="12" r="3"/></svg>
<svg style="left:58px;top:1708px" width="36" height="36" viewBox="0 0 36 36" fill="none"><defs><linearGradient id="ng1" x1="19" y1="17" x2="29.500" y2="31" gradientUnits="userSpaceOnUse"><stop offset="0.350" stop-color="#fff"/><stop offset="1" stop-color="#fff" stop-opacity="0"/></linearGradient><linearGradient id="ng2" x1="27" y1="5" x2="27" y2="21" gradientUnits="userSpaceOnUse"><stop offset="0.400" stop-color="#fff"/><stop offset="1" stop-color="#fff" stop-opacity="0"/></linearGradient></defs><path d="M5.700 5.300H10.500L30.200 30.500L27.200 32.600L10 10.500V27.100H5.700Z" fill="url(#ng1)"/><rect x="25.400" y="5.300" width="3.800" height="15.700" fill="url(#ng2)"/></svg>
</div>
<script>(function(){var w=window.innerWidth||0;if(w>=600&&Math.abs(w-2880)>30){var r=document.getElementById("r");r.style.transformOrigin="0 0";r.style.transform="scale("+(w/2880)+")";}})();</script>
</body></html>
